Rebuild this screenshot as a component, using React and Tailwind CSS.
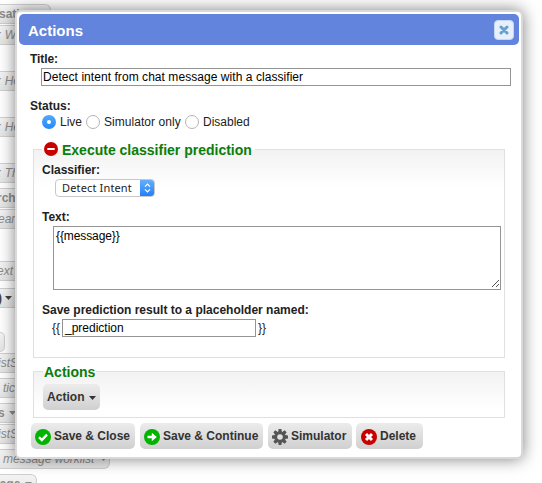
import React from "react";

const chips = [
  { text: "sation", cls: "mt-[4px] w-[51px] -indent-px font-bold", arrow: "ml-[4px]" },
  { text: ": When", cls: "mt-[1px] w-[90px] -indent-[2px] italic" },
  { text: ": Hello", cls: "mt-[26px] w-[90px] -indent-[2px] italic" },
  { text: ": Hello", cls: "mt-[26px] w-[90px] -indent-[2px] italic" },
  { text: ": Thanks", cls: "mt-[26px] w-[90px] -indent-[2px] italic" },
  { text: "rch", cls: "mt-[5px] w-[60px] -indent-[3px] font-bold" },
  { text: "earch", cls: "mt-[1px] w-[60px] -indent-[2px] italic" },
  { text: "ext", cls: "mt-[32px] w-[60px] -indent-[3px] italic" },
  { text: ")", cls: "mt-[7px] w-[60px] -indent-[2px] font-bold", arrow: "ml-[3px]", dark: true },
  { text: "", cls: "mt-[24px] w-[5px]" },
  { text: "istSet", cls: "mt-[1px] w-[60px] -indent-[2px] italic" },
  { text: "ticket", cls: "mt-[5px] w-[60px] pl-[3px] italic" },
  { text: "s", cls: "mt-[5px] w-[60px] -indent-[2px] font-bold", arrow: "ml-[4px]" },
  { text: "istSet", cls: "mt-[1px] w-[60px] -indent-[2px] italic" },
  { text: "message worklist", cls: "mt-[5px] w-[110px] pl-[3px] italic tracking-[-0.05px]", arrow: "ml-[6px]" },
  { text: "sage", cls: "mt-[5px] w-[37px] -indent-[7px] font-bold", arrow: "ml-[5px]" },
];

function Chip({ text, cls, arrow, dark }) {
  return (
    <div
      className={`flex h-[20px] shrink-0 items-center overflow-hidden whitespace-pre rounded-r-[6px] border border-l-0 border-[#cfcfcf] bg-linear-to-b from-[#f4f4f4] to-[#e4e4e4] text-[12px] leading-none ${dark ? "text-[#444]" : "text-[#8c8c8c]"} ${cls}`}
    >
      {text}
      {arrow && <Caret className={arrow} />}
    </div>
  );
}

function Caret({ className = "" }) {
  return (
    <svg width="7" height="4" viewBox="0 0 7 4" className={`shrink-0 ${className}`}>
      <path d="M0 0h7L3.5 4z" fill="currentColor" />
    </svg>
  );
}

function Disc({ color, children, className = "" }) {
  return (
    <svg width="16" height="16" viewBox="0 0 16 16" className={`shrink-0 ${className}`}>
      <circle cx="8" cy="8" r="8" fill={color} />
      {children}
    </svg>
  );
}

function Gear() {
  return (
    <svg width="16" height="16" viewBox="0 0 16 16" className="shrink-0 translate-y-px">
      <g fill="#555">
        {[0, 45, 90, 135].map((a) => (
          <path key={a} d="M6.6 0h2.8l.5 3v10l-.5 3H6.6l-.5-3V3z" transform={`rotate(${a} 8 8)`} />
        ))}
        <circle cx="8" cy="8" r="5.6" />
      </g>
      <circle cx="8" cy="8" r="2.8" fill="#e0e0e0" />
    </svg>
  );
}

function Button({ className = "", children }) {
  return (
    <button
      className={`flex h-[26px] shrink-0 items-center whitespace-nowrap rounded-[5px] bg-linear-to-b from-[#ececec] to-[#d0d0d0] text-[12px] font-bold leading-none text-[#333] ${className}`}
    >
      {children}
    </button>
  );
}

function Radio({ checked }) {
  return checked ? (
    <span className="flex size-[14px] shrink-0 items-center justify-center rounded-full bg-linear-to-b from-[#51a9fa] to-[#2489f8]">
      <span className="size-[4px] rounded-full bg-white" />
    </span>
  ) : (
    <span className="size-[14px] shrink-0 rounded-full border border-[#b4b4b4] bg-white" />
  );
}

export default function App() {
  return (
    <div className="relative h-[483px] w-[542px] overflow-hidden bg-white font-['Liberation_Sans',Arial,sans-serif] text-[12px] leading-[14px] text-[#222]">
      <div className="flex h-[483px] flex-col overflow-hidden">
        {chips.map((c, i) => (
          <Chip key={i} {...c} />
        ))}
      </div>

      <div className="absolute left-[15px] top-[10px] h-[449px] w-[508px] rounded-[6px] border-2 border-[#d9d9d9] bg-white px-[2px] pt-[2px] shadow-[0_0_16px_rgba(0,0,0,0.5)]">
        <div className="flex h-[31px] items-center justify-between rounded-[5px] bg-[#6284dc] pl-[9px] pr-[5px]">
          <span className="mt-px text-[15px] font-bold leading-none text-white">Actions</span>
          <span className="mt-px flex size-[20px] items-center justify-center rounded-[4px] border border-[#c3d9f3] bg-[#e6effa]">
            <svg width="10" height="10" viewBox="0 0 10 10">
              <path d="M2 2l6 6M8 2L2 8" stroke="#65a0cf" strokeWidth="3" strokeLinecap="round" />
            </svg>
          </span>
        </div>

        <div className="pl-[11px] pt-[7px]">
          <div className="font-bold tracking-[-0.1px]">Title:</div>
          <div className="ml-[11px] mt-[2px] flex h-[18px] w-[470px] items-center border border-[#949494] pl-[1px] tracking-[0.055px] text-black">
            Detect intent from chat message with a classifier
          </div>
          <div className="mt-[13px] font-bold">Status:</div>
          <div className="ml-[12px] mt-[2px] flex h-[14px] items-center">
            <Radio checked />
            <span className="ml-[4px] w-[26px]">Live</span>
            <Radio />
            <span className="ml-[4px] w-[81px] tracking-[0.05px]">Simulator only</span>
            <Radio />
            <span className="ml-[4px]">Disabled</span>
          </div>
        </div>

        <fieldset className="ml-[14px] mt-[11px] h-[218px] w-[472px] border border-[#e0e0e0] bg-linear-to-b from-[#f2f2f2] to-white to-[37px] pl-[8px]">
          <legend className="flex h-[18px] items-center pr-[3px] text-[14px] font-bold leading-[18px] text-[#0a7d0a]">
            <svg width="14" height="14" viewBox="0 0 14 14" className="ml-[2px] mr-[4px]">
              <circle cx="7" cy="7" r="7" fill="#c80000" />
              <path d="M3.3 7h7.4" stroke="#fff" strokeWidth="2" />
            </svg>
            <span className="translate-y-px">Execute classifier prediction</span>
          </legend>
          <div className="mt-[5px] font-bold">Classifier:</div>
          <div className="ml-[13px] mt-[2px] flex h-[18px] w-[100px] items-center overflow-hidden rounded-[4px] border border-[#c8c8c8] bg-white pl-[6px] font-['Noto_Sans',sans-serif] text-[11px] text-[#222]">
            <span className="flex-1 whitespace-nowrap tracking-[0.15px]">Detect Intent</span>
            <span className="-my-px -mr-px flex h-[18px] w-[15px] shrink-0 items-center justify-center bg-linear-to-b from-[#69b1fa] to-[#1a7cf8]">
              <svg width="7" height="10" viewBox="0 0 7 10" fill="none" stroke="#fff" strokeWidth="1.2">
                <path d="M1 3.7L3.5 1.2L6 3.7M1 6.3L3.5 8.8L6 6.3" />
              </svg>
            </span>
          </div>
          <div className="mt-[13px] font-bold">Text:</div>
          <div className="relative ml-[11px] mt-[2px] h-[64px] w-[448px] border border-[#949494] bg-white pl-[2px] pt-[2px] tracking-[-0.1px] text-black">
            {"{{message}}"}
            <svg width="8" height="8" viewBox="0 0 8 8" className="absolute bottom-px right-px" shapeRendering="crispEdges">
              <path d="M0.5 7.5l7-7M4.5 7.5l3-3" stroke="#555" />
            </svg>
          </div>
          <div className="mt-[13px] font-bold">Save prediction result to a placeholder named:</div>
          <div className="ml-[10px] mt-[2px] flex h-[18px] items-center">
            <span className="w-[10px]">{"{{"}</span>
            <span className="mr-[2px] flex h-[18px] w-[194px] items-center border border-[#949494] bg-white pl-[2px] text-black">_prediction</span>
            <span>{"}}"}</span>
          </div>
        </fieldset>

        <fieldset className="ml-[14px] mt-[4px] h-[56px] w-[472px] border border-[#e0e0e0] bg-linear-to-b from-[#f2f2f2] to-white to-[37px] pl-[9px]">
          <legend className="h-[18px] px-px text-[14px] font-bold leading-[18px] text-[#0a7d0a]">
            <span className="relative top-px">Actions</span>
          </legend>
          <Button className="mt-[4px] w-[57px] pl-[4px]">
            <span className="tracking-[0.05px]">Action</span>
            <Caret className="ml-[4px] mt-px" />
          </Button>
        </fieldset>

        <div className="mt-[5px] flex pl-[12px]">
          <Button className="w-[104px] gap-[3px] pl-[4px]">
            <Disc color="#00b400" className="translate-y-px">
              <path d="M4 8.2l2.8 2.8L12 5.6" fill="none" stroke="#fff" strokeWidth="2.4" />
            </Disc>
            Save &amp; Close
          </Button>
          <Button className="ml-[5px] w-[123px] gap-[3px] pl-[4px]">
            <Disc color="#00b400" className="translate-y-px">
              <path d="M3.5 6.7h4.3V3.8L12.8 8l-5 4.2V9.3H3.5z" fill="#fff" />
            </Disc>
            Save &amp; Continue
          </Button>
          <Button className="ml-[5px] w-[84px] gap-[3px] pl-[4px]">
            <Gear />
            Simulator
          </Button>
          <Button className="ml-[4px] w-[67px] gap-[3px] pl-[5px]">
            <Disc color="#c80000" className="translate-y-px">
              <path d="M5 5l6 6M11 5l-6 6" stroke="#fff" strokeWidth="3" />
            </Disc>
            Delete
          </Button>
        </div>
      </div>
    </div>
  );
}
